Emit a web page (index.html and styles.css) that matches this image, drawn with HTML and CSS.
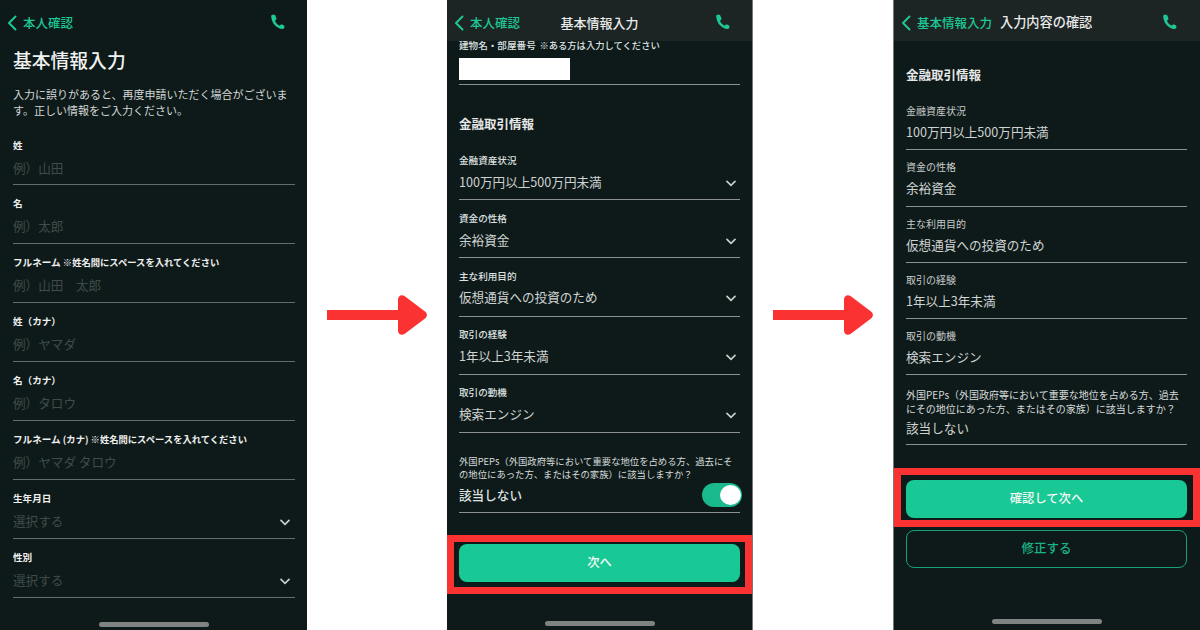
FILE: index.html
```html
<!DOCTYPE html>
<html lang="ja">
<head>
<meta charset="utf-8">
<title>基本情報入力</title>
<link rel="stylesheet" href="styles.css">
</head>
<body>
<svg class="defs" width="0" height="0" aria-hidden="true">
  <symbol id="phone" viewBox="0 0 16 16"><path d="M2.2 2.200C2.200 1.200 3 .8 3.900 .8L5 .8C5.800 .8 6.300 1.300 6.500 2L7.300 4C7.600 4.900 7.400 5.600 6.800 6.100L5.900 6.800C6.800 9 8.600 10.800 10.600 11.800L11.300 11C11.900 10.400 12.700 10.400 13.500 10.700L14.300 11C15.100 11.300 15.500 11.900 15.500 12.800C15.500 14 14.800 15 13.500 15C7.500 14.500 2.500 9 2.200 2.200Z"/></symbol>
  <symbol id="back" viewBox="0 0 10 16"><path d="M8.5 1.5 2 8l6.5 6.5"/></symbol>
  <symbol id="down" viewBox="0 0 12 8"><path d="M1.2 1.5 6 6.2l4.8-4.7"/></symbol>
</svg>

<main class="flow">
  <section class="phone p1">
    <header class="bar bar-plain">
      <div class="back"><svg class="i-back"><use href="#back"/></svg><span>本人確認</span></div>
      <svg class="i-phone"><use href="#phone"/></svg>
    </header>
    <div class="content">
      <h1 class="title">基本情報入力</h1>
      <p class="lead">入力に誤りがあると、再度申請いただく場合がございます。正しい情報をご入力ください。</p>
      <div class="field f1"><div class="lab">姓</div><div class="val ph">例）山田</div></div>
      <div class="field f1"><div class="lab">名</div><div class="val ph">例）太郎</div></div>
      <div class="field f1"><div class="lab">フルネーム <small>※姓名間にスペースを入れてください</small></div><div class="val ph">例）山田　太郎</div></div>
      <div class="field f1"><div class="lab">姓（カナ）</div><div class="val ph">例）ヤマダ</div></div>
      <div class="field f1"><div class="lab">名（カナ）</div><div class="val ph">例）タロウ</div></div>
      <div class="field f1"><div class="lab">フルネーム <small>(カナ) ※姓名間にスペースを入れてください</small></div><div class="val ph">例）ヤマダ タロウ</div></div>
      <div class="field f1"><div class="lab">生年月日</div><div class="val ph">選択する<svg class="i-down"><use href="#down"/></svg></div></div>
      <div class="field f1"><div class="lab">性別</div><div class="val ph">選択する<svg class="i-down"><use href="#down"/></svg></div></div>
    </div>
    <div class="home"></div>
  </section>

  <div class="gap"><svg class="arrow" viewBox="0 0 100 40"><path d="M0 15H71V4.5C71 .8 74.5-1 77.5 1L98 16.6C100.500 18.500 100.500 21.500 98 23.400L77.500 39C74.500 41 71 39.200 71 35.500V25H0Z"/></svg></div>

  <section class="phone p2">
    <header class="bar">
      <div class="back"><svg class="i-back"><use href="#back"/></svg><span>本人確認</span></div>
      <div class="bar-title">基本情報入力</div>
      <svg class="i-phone"><use href="#phone"/></svg>
    </header>
    <div class="content clip">
      <div class="field bldg"><div class="lab light">建物名・部屋番号 <small>※ある方は入力してください</small></div><div class="whitebox"></div></div>
      <h2 class="sec">金融取引情報</h2>
      <div class="field f2"><div class="lab light">金融資産状況</div><div class="val">100万円以上500万円未満<svg class="i-down"><use href="#down"/></svg></div></div>
      <div class="field f2"><div class="lab light">資金の性格</div><div class="val">余裕資金<svg class="i-down"><use href="#down"/></svg></div></div>
      <div class="field f2 raised"><div class="lab light">主な利用目的</div><div class="val">仮想通貨への投資のため<svg class="i-down"><use href="#down"/></svg></div></div>
      <div class="field f2"><div class="lab light">取引の経験</div><div class="val">1年以上3年未満<svg class="i-down"><use href="#down"/></svg></div></div>
      <div class="field f2"><div class="lab light">取引の動機</div><div class="val">検索エンジン<svg class="i-down"><use href="#down"/></svg></div></div>
      <div class="field pep">
        <div class="q">外国PEPs（外国政府等において重要な地位を占める方、過去にその地位にあった方、またはその家族）に該当しますか？</div>
        <div class="val strong">該当しない<span class="toggle"><span class="knob"></span></span></div>
      </div>
    </div>
    <div class="hl hl2"><div class="btn">次へ</div></div>
    <div class="home"></div>
  </section>

  <div class="gap"><svg class="arrow" viewBox="0 0 100 40"><path d="M0 15H71V4.5C71 .8 74.5-1 77.5 1L98 16.6C100.500 18.500 100.500 21.500 98 23.400L77.500 39C74.500 41 71 39.200 71 35.500V25H0Z"/></svg></div>

  <section class="phone p3">
    <header class="bar">
      <div class="back"><svg class="i-back"><use href="#back"/></svg><span>基本情報入力</span></div>
      <div class="bar-title t3">入力内容の確認</div>
      <svg class="i-phone"><use href="#phone"/></svg>
    </header>
    <div class="content">
      <h2 class="sec s3">金融取引情報</h2>
      <div class="field f3"><div class="lab plain">金融資産状況</div><div class="val">100万円以上500万円未満</div></div>
      <div class="field f3"><div class="lab plain">資金の性格</div><div class="val">余裕資金</div></div>
      <div class="field f3"><div class="lab plain">主な利用目的</div><div class="val">仮想通貨への投資のため</div></div>
      <div class="field f3"><div class="lab plain">取引の経験</div><div class="val">1年以上3年未満</div></div>
      <div class="field f3"><div class="lab plain">取引の動機</div><div class="val">検索エンジン</div></div>
      <div class="field pep3">
        <div class="q">外国PEPs（外国政府等において重要な地位を占める方、過去にその地位にあった方、またはその家族）に該当しますか？</div>
        <div class="val">該当しない</div>
      </div>
    </div>
    <div class="hl hl3"><div class="btn">確認して次へ</div></div>
    <div class="btn-outline">修正する</div>
    <div class="home"></div>
  </section>
</main>
</body>
</html>
```
FILE: styles.css
```css
* { box-sizing: border-box; }
html, body { margin: 0; padding: 0; }
body {
  width: 1200px;
  height: 630px;
  overflow: hidden;
  background: #fff;
  font-family: "Noto Sans CJK JP", "Noto Sans", sans-serif;
  color: #e4e7e6;
}
.defs { display: block; height: 0; }
.flow {
  display: grid;
  grid-template-columns: 307px 140px 306px 140px 307px;
  height: 630px;
}
.phone {
  position: relative;
  height: 630px;
  background: #0e1a19;
  display: flex;
  flex-direction: column;
  overflow: hidden;
}
.p2 { border-right: 1px solid #777; }
.p3 { border-left: 1px solid #777; }
.gap { display: flex; align-items: center; justify-content: center; }
.arrow { width: 100px; height: 40px; fill: #fb3232; }

.bar {
  height: 41px;
  flex: none;
  background: #1d2424;
  display: flex;
  align-items: center;
  position: relative;
  padding: 4px 0 0 7px;
  z-index: 1;
}
.bar-plain { background: transparent; }
.back { display: flex; align-items: center; gap: 6px; font-size: 12.500px; color: #1ec795; font-weight: 500; line-height: 16px; }
.i-back { width: 10px; height: 16px; fill: none; stroke: #1ec795; stroke-width: 2; stroke-linecap: round; stroke-linejoin: round; }
.i-phone { position: absolute; top: 14px; right: 22px; width: 16px; height: 16px; fill: #1ec795; }
.p3 .i-phone { right: 23px; }
.bar-title { position: absolute; left: 0; right: 0; top: 14px; text-align: center; font-size: 13px; line-height: 18px; font-weight: 500; color: #e8eaea; }
.t3 { left: 106px; right: auto; width: 95px; top: 12.500px; text-align: left; font-size: 13.200px; white-space: nowrap; }

.content { padding: 0 12px 0 13px; flex: none; }
.title { margin: 6px 0 0; font-size: 18.800px; line-height: 26px; font-weight: 500; color: #f1f2f2; }
.lead { margin: 14px 0 0; font-size: 11px; line-height: 15.500px; color: #d3d7d6; height: 31px; }

.field { border-bottom: 1px solid #8c9190; display: flex; flex-direction: column; }
.lab { font-size: 9.600px; line-height: 14px; font-weight: 700; color: #eef0ef; white-space: nowrap; }
.lab small { font-size: 9.300px; font-weight: 700; }
.lab.light { font-weight: 500; color: #dfe2e1; }
.lab.light small { margin-left: 1.500px; font-weight: 500; }
.lab.plain { font-size: 10px; font-weight: 400; color: #c7cccb; }
.val { display: flex; align-items: center; justify-content: space-between; font-size: 12.600px; line-height: 18px; color: #cfd3d2; white-space: nowrap; }
.val.ph { color: #3f4b4a; }
.val.strong { font-weight: 500; color: #dfe2e1; }
.i-down { width: 10px; height: 7px; fill: none; stroke: #c9cdcc; stroke-width: 2; stroke-linecap: round; stroke-linejoin: round; margin: 3px 4px 0 0; }
.p1 .i-down { margin-right: 5px; }

.f1 { height: 59px; padding-top: 10.500px; gap: 7px; border-bottom-color: #666c6b; }
.lead + .f1 { height: 67px; padding-top: 20px; }

.clip { height: 494px; overflow: hidden; padding: 0 12px; }
.bldg { height: 44px; }
.bldg .lab { height: 20px; margin-top: -3px; }
.whitebox { width: 111px; height: 22px; background: #fff; }
.sec { margin: 30px 0 0; font-size: 12.500px; line-height: 18px; font-weight: 700; color: #e6e8e8; }
.f2 { height: 58.200px; padding-top: 10.500px; gap: 6px; }
.f2.raised .val { margin-top: -1px; }
.sec + .f2 { margin-top: 9px; }
.pep { height: 60px; margin-top: 20px; gap: 2px; padding-top: 2px; }
.q { font-size: 9.350px; line-height: 13px; color: #d6dad9; }
.pep .val { height: 24px; }
.toggle { width: 40px; height: 24px; margin-right: -2px; border-radius: 12px; background: #19b88d; position: relative; display: block; }
.knob { position: absolute; top: 2px; right: 1px; width: 21px; height: 20px; border-radius: 50%; background: #fff; }

.hl { border: 7px solid #fb3232; flex: none; height: 59px; background: #0e1a19; }
.hl2 { margin-top: 0; padding: 2px 5px; }
.btn { height: 38px; padding-bottom: 3px; border-radius: 8px; background: #19c995; display: flex; align-items: center; justify-content: center; font-size: 12.300px; font-weight: 500; color: #f4f7f6; }
.home { position: absolute; left: 98px; bottom: 5px; width: 110px; height: 5px; border-radius: 3px; background: #7f8483; }
.p1 .home { left: 99px; bottom: 3px; }
.p2 .home { bottom: 4px; }
.p3 .home { bottom: 6px; }

.p3 .content { padding: 0 13px 0 12px; }
.s3 { margin-top: 25px; }
.f3 { height: 56.300px; padding-top: 10px; gap: 5px; }
.s3 + .f3 { margin-top: 10px; }
.pep3 { height: 70px; padding-top: 12.500px; gap: 3px; }
.pep3 .q { font-size: 10px; line-height: 14px; }
.hl3 { margin-top: 23px; padding: 5px 6px 2px 5px; }
.btn-outline { margin: 3px 13px 0 12px; height: 38px; padding-bottom: 3px; border: 1px solid #18a07a; border-radius: 8px; display: flex; align-items: center; justify-content: center; font-size: 12.500px; font-weight: 500; color: #18b287; }
```
